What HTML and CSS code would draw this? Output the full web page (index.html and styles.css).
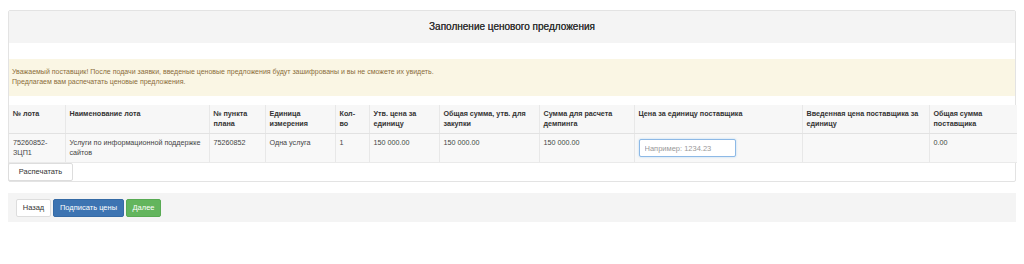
FILE: index.html
```html
<!DOCTYPE html>
<html lang="ru">
<head>
  <meta charset="UTF-8">
  <title>Заполнение ценового предложения</title>
  <link rel="stylesheet" href="styles.css">
</head>
<body>
  <div class="page">
    <div class="panel">
      <div class="panel-heading">
        <h3 class="panel-title">Заполнение ценового предложения</h3>
      </div>
      <div class="panel-body">
        <div class="alert">
          Уважаемый поставщик! После подачи заявки, введеные ценовые предложения будут зашифрованы и вы не сможете их увидеть.<br>
          Предлагаем вам распечатать ценовые предложения.
        </div>
        <table class="prices">
          <colgroup>
            <col style="width:56px"><col style="width:144px"><col style="width:56px"><col style="width:70px">
            <col style="width:34px"><col style="width:70px"><col style="width:100px"><col style="width:95px">
            <col style="width:168px"><col style="width:127px"><col style="width:88px">
          </colgroup>
          <thead>
            <tr>
              <th>№ лота</th>
              <th>Наименование лота</th>
              <th>№ пункта плана</th>
              <th>Единица измерения</th>
              <th>Кол-во</th>
              <th>Утв. цена за единицу</th>
              <th>Общая сумма, утв. для закупки</th>
              <th>Сумма для расчета демпинга</th>
              <th>Цена за единицу поставщика</th>
              <th>Введенная цена поставщика за единицу</th>
              <th>Общая сумма поставщика</th>
            </tr>
          </thead>
          <tbody>
            <tr>
              <td>75260852-ЗЦП1</td>
              <td>Услуги по информационной поддержке сайтов</td>
              <td>75260852</td>
              <td>Одна услуга</td>
              <td>1</td>
              <td>150 000.00</td>
              <td>150 000.00</td>
              <td>150 000.00</td>
              <td><input class="price-input" type="text" placeholder="Например: 1234.23"></td>
              <td></td>
              <td>0.00</td>
            </tr>
          </tbody>
        </table>
        <button class="btn btn-default">Распечатать</button>
      </div>
    </div>

    <div class="actions">
      <button class="btn btn-default">Назад</button>
      <button class="btn btn-primary">Подписать цены</button>
      <button class="btn btn-success">Далее</button>
    </div>
  </div>
</body>
</html>
```

FILE: styles.css
```css
body{
  margin: 0;
  font-family: "Liberation Sans", Arial, sans-serif;
  font-size: 7.2px;
  line-height: 10px;
  color: #333;
  background: #fff;
}
.page{
  padding: 10px 8px;
}
.panel{
  border: 1px solid #e3e3e3;
  border-radius: 2px;
  background: #fff;
}
.panel-heading{
  background: #f4f4f4;
  height: 32px;
  display: flex;
  align-items: center;
  justify-content: center;
}
.panel-title{
  margin: 0;
  font-size: 10px;
  font-weight: normal;
  color: #333;
  text-shadow: 0 0 0.4px #333;
}
.panel-body{
  padding-top: 16px;
}
.alert{
  background: #faf6e4;
  color: #8a6d3b;
  padding: 8px 3px 9px;
  height: 20px;
  font-size: 7px;
}
.prices{
  border-collapse: collapse;
  table-layout: fixed;
  width: 100%;
  margin-top: 9px;
}
.prices th,
.prices td{
  text-align: left;
  vertical-align: top;
  padding: 4px 6px 4px 4px;
  border-right: 1px solid #e8e8e8;
}
.prices th:last-child,
.prices td:last-child{
  border-right: none;
}
.prices th{
  background: #f7f7f7;
  font-weight: bold;
  height: 19px;
  border-bottom: 1px solid #e2e2e2;
}
.prices td{
  background: #f8f8f8;
  height: 20px;
  color: #444;
  border-bottom: 1px solid #eaeaea;
}
.price-input{
  display: block;
  box-sizing: border-box;
  width: 97px;
  height: 18px;
  margin-top: 1px;
  padding: 0 5px;
  font-family: inherit;
  font-size: 7.5px;
  border: 1px solid #8db9e6;
  border-radius: 2px;
  box-shadow: 0 0 2px rgba(102,175,233,0.5);
  background: #fff;
  outline: none;
}
.price-input::placeholder{
  color: #999;
}
.btn{
  font-family: inherit;
  font-size: 7.5px;
  line-height: 10px;
  height: 18px;
  padding: 0 7px;
  border: 1px solid transparent;
  border-radius: 2px;
  cursor: pointer;
}
.btn-default{
  background: #fff;
  border-color: #ddd;
  color: #333;
}
.btn-primary{
  background: #3d74b2;
  border-color: #356aa5;
  color: #fff;
}
.btn-success{
  background: #63b55d;
  border-color: #58aa53;
  color: #fff;
}
.panel-body > .btn{
  margin: 0 0 0 -1px;
  width: 65px;
  display: block;
}
.actions{
  margin-top: 11px;
  background: #f4f4f4;
  height: 29px;
  display: flex;
  align-items: center;
  gap: 2px;
  padding-left: 8px;
}
.actions .btn-default{
  width: 35px;
  padding: 0;
}
.actions .btn-primary{
  width: 71px;
  padding: 0;
}
.actions .btn-success{
  width: 35px;
  padding: 0;
}
```
